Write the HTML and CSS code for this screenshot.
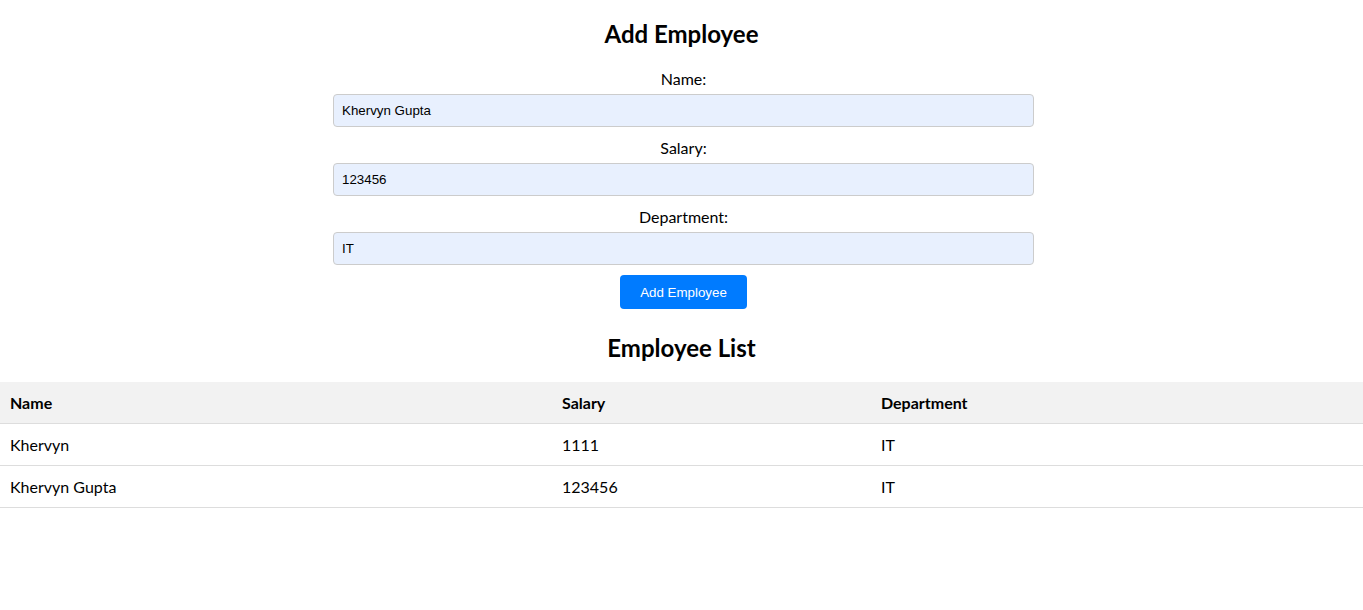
FILE: index.html
```html
<!DOCTYPE html>
<html lang="en">
<head>
<meta charset="utf-8">
<title>Employees</title>
<link rel="stylesheet" href="styles.css">
</head>
<body>
<div class="app">
  <h2 class="title">Add Employee</h2>
  <form class="form">
    <label class="label" for="name">Name:</label>
    <input class="input" id="name" type="text" value="Khervyn Gupta">
    <label class="label" for="salary">Salary:</label>
    <input class="input" id="salary" type="text" value="123456">
    <label class="label" for="dept">Department:</label>
    <input class="input" id="dept" type="text" value="IT">
    <button class="btn" type="button">Add Employee</button>
  </form>
  <h2 class="title list-title">Employee List</h2>
  <table class="table">
    <thead>
      <tr><th class="c1">Name</th><th class="c2">Salary</th><th>Department</th></tr>
    </thead>
    <tbody>
      <tr><td>Khervyn</td><td>1111</td><td>IT</td></tr>
      <tr><td>Khervyn Gupta</td><td>123456</td><td>IT</td></tr>
    </tbody>
  </table>
</div>
</body>
</html>
```
FILE: styles.css
```css
body {
  margin: 0;
  font-family: Lato, "Noto Sans", sans-serif;
  color: #000;
  background: #fff;
}
.app {
  display: flex;
  flex-direction: column;
  align-items: center;
}
.title {
  font-size: 24px;
  line-height: 32px;
  font-weight: 700;
  margin: 18px 0 18px;
  text-align: center;
}
.form {
  width: 701px;
  margin-left: 4px;
  display: flex;
  flex-direction: column;
  align-items: center;
}
.label {
  font-size: 16px;
  line-height: 21px;
  margin-bottom: 5px;
}
.input {
  width: 100%;
  box-sizing: border-box;
  height: 33px;
  padding: 8px;
  margin: 0 0 10px;
  border: 1px solid #ccc;
  border-radius: 4px;
  background: #e8f0fe;
  font-family: "Liberation Sans", Arial, sans-serif;
  font-size: 13.33px;
  color: #000;
}
.btn {
  height: 34px;
  padding: 0 20px;
  white-space: nowrap;
  border: none;
  border-radius: 4px;
  background: #007bff;
  color: #fff;
  font-family: "Liberation Sans", Arial, sans-serif;
  font-size: 13.33px;
  cursor: pointer;
}
.list-title {
  margin: 23px 0 18px;
}
.table {
  width: 100%;
  border-collapse: collapse;
  font-size: 16px;
  line-height: 21px;
}
.table th,
.table td {
  text-align: left;
  padding: 10px;
  border-bottom: 1px solid #ddd;
}
.table th {
  background: #f2f2f2;
  font-weight: 700;
}
.c1 { width: 532px; }
.c2 { width: 299px; }
```
